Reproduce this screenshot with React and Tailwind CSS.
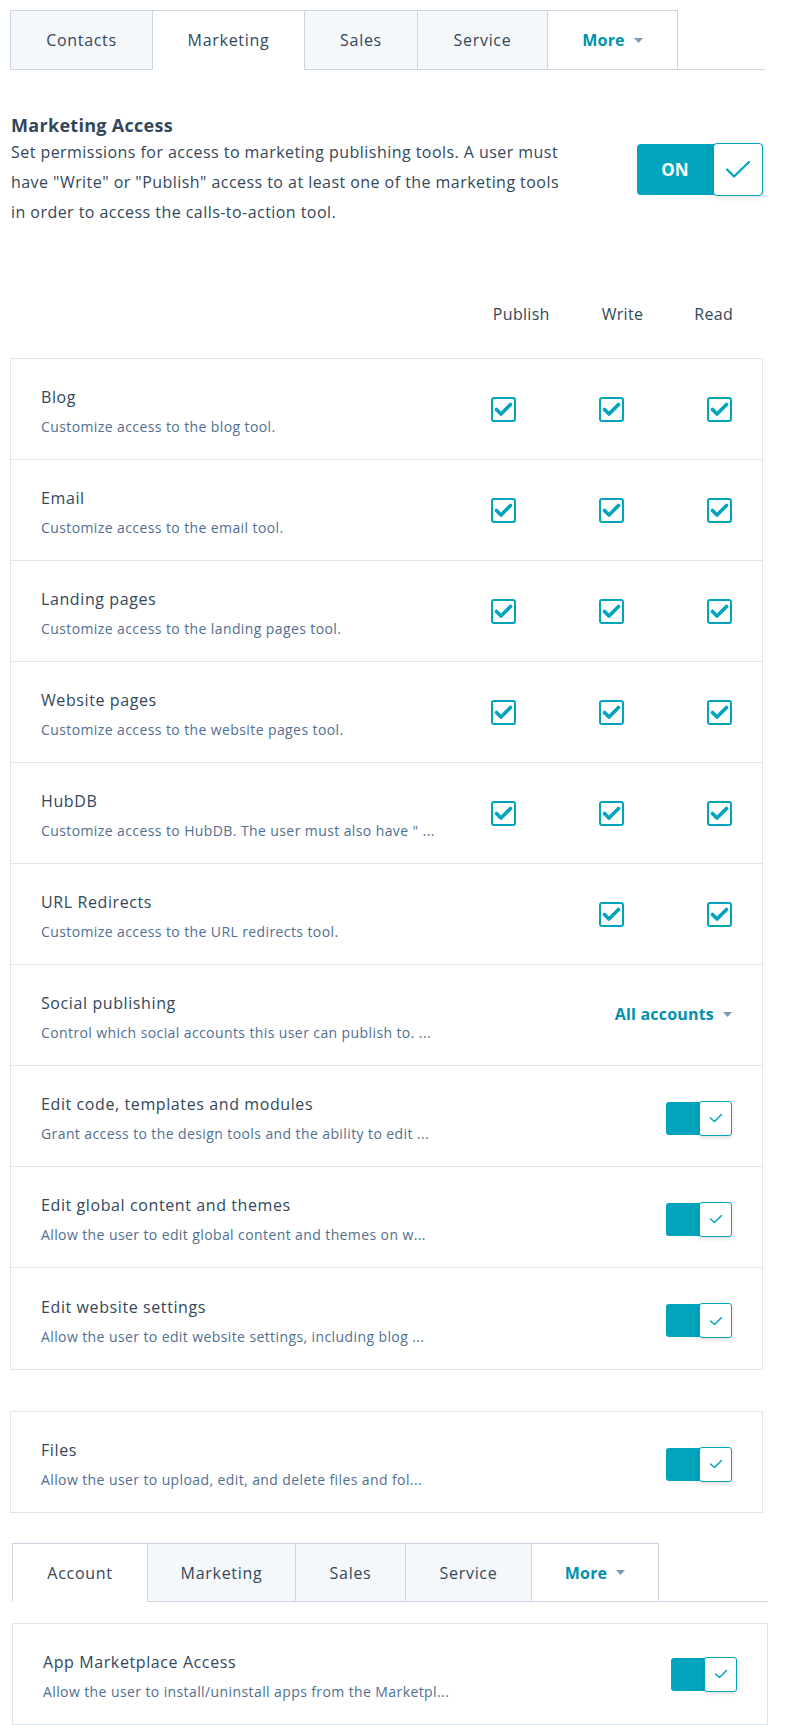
import React from "react";

const TEAL = "#00a4bd";

function Caret() {
  return (
    <svg width="9" height="5" viewBox="0 0 9 5" className="ml-[9px]">
      <polygon points="0,0 9,0 4.5,5" fill="#7c98b6" />
    </svg>
  );
}

function Tabs({ items, active, widths, height, lineRight }) {
  return (
    <div className="flex border-b border-[#cbd6e2]" style={{ width: lineRight }}>
      {items.map((t, i) => {
        const isActive = i === active;
        const isMore = t === "More";
        const last = i === items.length - 1;
        return (
          <div
            key={t}
            style={{ width: widths[i], height }}
            className={`-mb-px flex items-center justify-center border-t border-l border-[#cbd6e2] text-[16px] tracking-[0.7px] ${
              last ? "border-r" : ""
            } ${
              isActive
                ? "bg-white border-b border-b-white"
                : isMore
                ? "bg-white border-b"
                : "bg-[#f5f8fa] border-b"
            }`}
          >
            {isMore ? (
              <span className="flex items-center font-bold text-[#0091ae] tracking-[0.2px]">
                More
                <Caret />
              </span>
            ) : (
              <span className="text-[#33475b]">{t}</span>
            )}
          </div>
        );
      })}
    </div>
  );
}

function CheckBox({ hidden }) {
  if (hidden) return <div className="w-[25px] h-[25px]" />;
  return (
    <div className="w-[25px] h-[25px] rounded-[3px] border-2 border-[#00a4bd] bg-white flex items-center justify-center">
      <svg width="19" height="15" viewBox="0 0 19 15">
        <polyline
          points="2.5,7.5 7,12 16.5,2.5"
          fill="none"
          stroke={TEAL}
          strokeWidth="3.6"
          strokeLinecap="round"
          strokeLinejoin="round"
        />
      </svg>
    </div>
  );
}

function SmallToggle() {
  return (
    <div className="flex h-[33px] w-[66px] rounded-[3px] bg-[#00a4bd]">
      <div className="w-[33px]" />
      <div className="-my-px w-[33px] h-[35px] rounded-[3px] border border-[#00a4bd] bg-white shadow-[0_2px_4px_rgba(0,0,0,0.12)] flex items-center justify-center">
        <svg width="14" height="10" viewBox="0 0 14 10">
          <polyline
            points="1.5,5 5.5,8.5 12.5,1.5"
            fill="none"
            stroke={TEAL}
            strokeWidth="1.5"
            strokeLinecap="round"
            strokeLinejoin="round"
          />
        </svg>
      </div>
    </div>
  );
}

function BigToggle() {
  return (
    <div className="flex h-[51px] w-[126px] rounded-[4px] bg-[#00a4bd]">
      <div className="w-[76px] flex items-center justify-center text-white font-bold text-[17px]">
        ON
      </div>
      <div className="-my-px w-[50px] h-[53px] rounded-[4px] border border-[#00a4bd] bg-white shadow-[0_2px_5px_rgba(0,0,0,0.12)] flex items-center justify-center">
        <svg width="26" height="19" viewBox="0 0 26 19">
          <polyline
            points="2,9.5 9,16.5 24,2"
            fill="none"
            stroke={TEAL}
            strokeWidth="2.2"
            strokeLinecap="round"
            strokeLinejoin="round"
          />
        </svg>
      </div>
    </div>
  );
}

function RowText({ title, desc }) {
  return (
    <div className="flex-1 pt-[5px]">
      <div className="text-[16px] leading-[22px] tracking-[0.6px] text-[#33475b]">{title}</div>
      <div className="mt-[9px] text-[14px] leading-[20px] tracking-[0.4px] text-[#516f90]">{desc}</div>
    </div>
  );
}

const rows = [
  { title: "Blog", desc: "Customize access to the blog tool.", type: "checks", cols: [1, 1, 1] },
  { title: "Email", desc: "Customize access to the email tool.", type: "checks", cols: [1, 1, 1] },
  { title: "Landing pages", desc: "Customize access to the landing pages tool.", type: "checks", cols: [1, 1, 1] },
  { title: "Website pages", desc: "Customize access to the website pages tool.", type: "checks", cols: [1, 1, 1] },
  { title: "HubDB", desc: 'Customize access to HubDB. The user must also have " ...', type: "checks", cols: [1, 1, 1] },
  { title: "URL Redirects", desc: "Customize access to the URL redirects tool.", type: "checks", cols: [0, 1, 1] },
  { title: "Social publishing", desc: "Control which social accounts this user can publish to. ...", type: "dropdown" },
  { title: "Edit code, templates and modules", desc: "Grant access to the design tools and the ability to edit ...", type: "toggle" },
  { title: "Edit global content and themes", desc: "Allow the user to edit global content and themes on w...", type: "toggle" },
  { title: "Edit website settings", desc: "Allow the user to edit website settings, including blog ...", type: "toggle" },
];

export default function App() {
  return (
    <div className="w-[794px] min-h-[1725px] bg-white font-['Open_Sans',sans-serif] text-[#33475b] overflow-hidden">
      <div className="pl-[10px] pt-[10px]">
        <Tabs
          items={["Contacts", "Marketing", "Sales", "Service", "More"]}
          active={1}
          widths={[142, 152, 113, 130, 131]}
          height={60}
          lineRight={755}
        />
      </div>

      <div className="pl-[11px] pr-[31px]">
        <div className="mt-[44px] flex items-start justify-between">
          <div className="w-[566px]">
            <div className="text-[18px] leading-[23px] font-bold tracking-[0.3px] text-[#33475b]">Marketing Access</div>
            <div className="text-[16px] leading-[30px] tracking-[0.45px] text-[#33475b]">
              Set permissions for access to marketing publishing tools. A user must have "Write" or "Publish" access to at least one of the marketing tools in order to access the calls-to-action tool.
            </div>
          </div>
          <div className="mt-[30px]">
            <BigToggle />
          </div>
        </div>

        <div className="mt-[76px] flex justify-end pr-[30px] text-[16px] leading-[22px] tracking-[0.3px] text-[#33475b]">
          <span>Publish</span>
          <span className="ml-[52px]">Write</span>
          <span className="ml-[51px]">Read</span>
        </div>
      </div>

      <div className="ml-[10px] mr-[31px] mt-[33px] border border-[#dfe3eb] divide-y divide-[#dfe3eb]">
        {rows.map((r) => (
          <div key={r.title} className="h-[101px] flex items-center pl-[30px] pr-[30px]">
            <RowText title={r.title} desc={r.desc} />
            {r.type === "checks" && (
              <div className="flex gap-[83px]">
                {r.cols.map((c, i) => (
                  <CheckBox key={i} hidden={!c} />
                ))}
              </div>
            )}
            {r.type === "dropdown" && (
              <div className="flex items-center text-[16px] font-bold tracking-[0.2px] text-[#0091ae] pb-[2px]">
                All accounts
                <Caret />
              </div>
            )}
            {r.type === "toggle" && (
              <div className="pt-[4px]">
                <SmallToggle />
              </div>
            )}
          </div>
        ))}
      </div>

      <div className="ml-[10px] mr-[31px] mt-[41px] border border-[#dfe3eb]">
        <div className="h-[100px] flex items-center pl-[30px] pr-[30px]">
          <RowText title="Files" desc="Allow the user to upload, edit, and delete files and fol..." />
          <div className="pt-[4px]">
            <SmallToggle />
          </div>
        </div>
      </div>

      <div className="pl-[12px] mt-[30px]">
        <Tabs
          items={["Account", "Marketing", "Sales", "Service", "More"]}
          active={0}
          widths={[135, 148, 110, 126, 128]}
          height={59}
          lineRight={756}
        />
      </div>

      <div className="ml-[12px] mr-[26px] mt-[21px] border border-[#dfe3eb]">
        <div className="h-[100px] flex items-center pl-[30px] pr-[30px]">
          <RowText title="App Marketplace Access" desc="Allow the user to install/uninstall apps from the Marketpl..." />
          <SmallToggle />
        </div>
      </div>
    </div>
  );
}
